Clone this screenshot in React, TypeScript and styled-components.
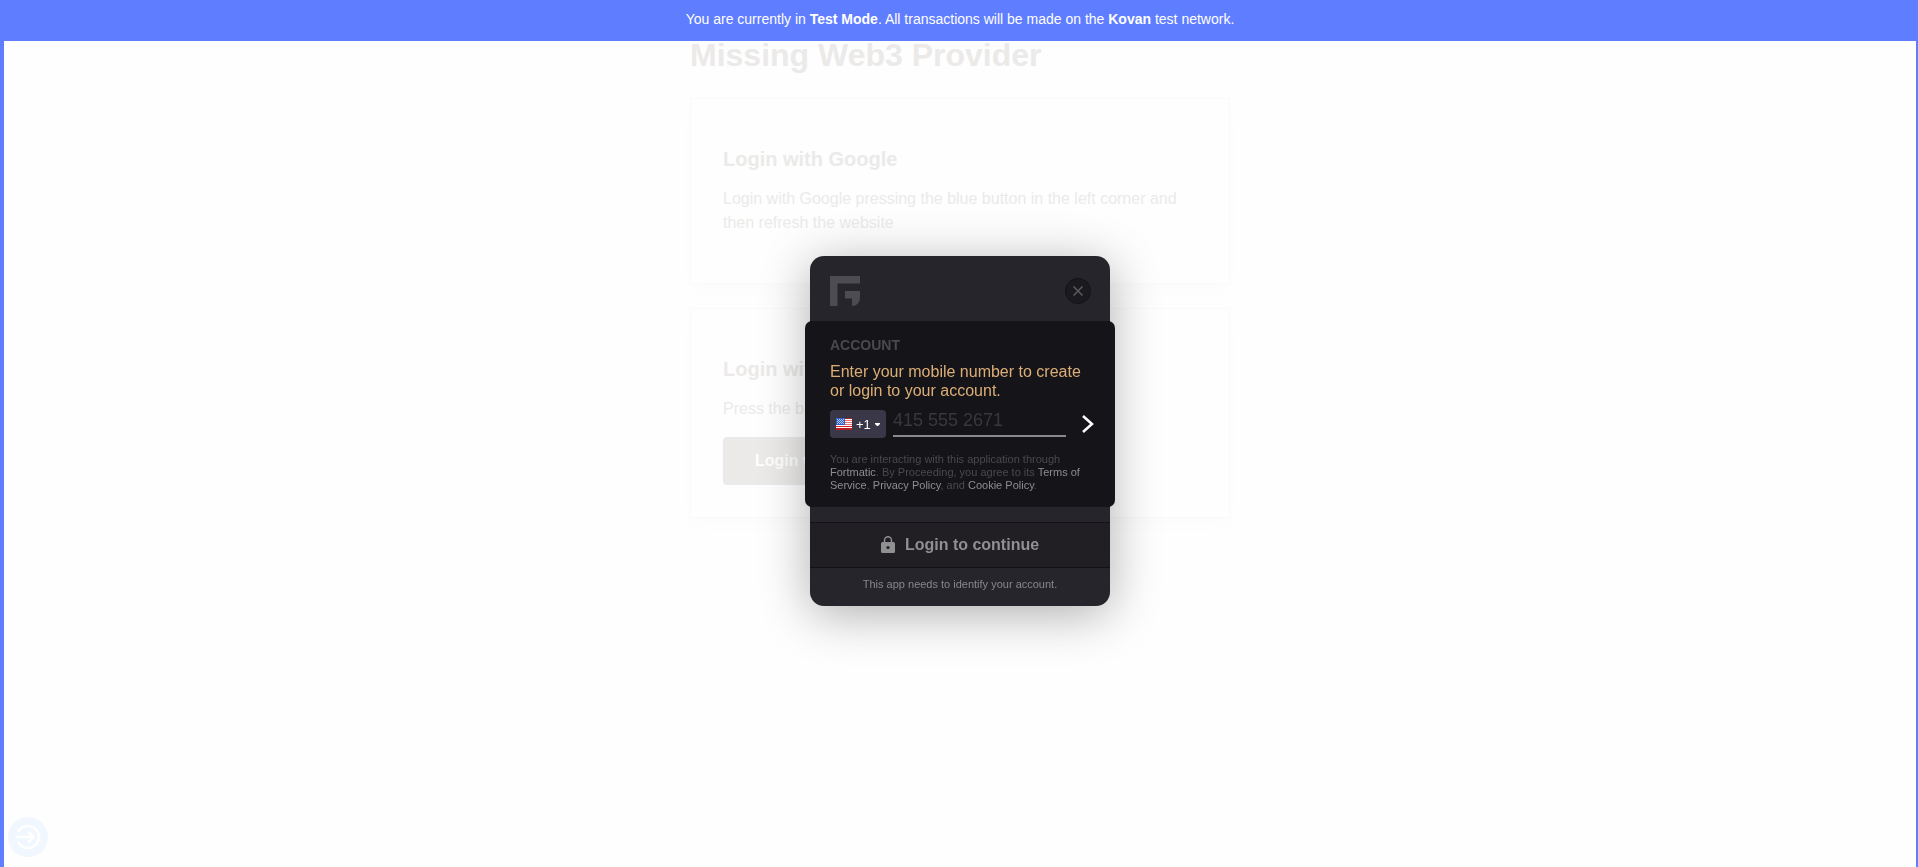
import React from "react";
import styled, { createGlobalStyle } from "styled-components";

const GlobalStyle = createGlobalStyle`
  * { box-sizing: border-box; }
  html, body { margin: 0; }
  body {
    background: #fefefe;
    font-family: "Liberation Sans", Arial, sans-serif;
  }
  h1, h2, p { margin: 0; }
  button { font-family: inherit; cursor: pointer; }
`;

const Page = styled.main`
  min-height: 100vh;
  padding: 36px 16px 24px 18px;
`;

const Content = styled.div`
  max-width: 540px;
  margin: 0 auto;
  display: flex;
  flex-direction: column;
  gap: 24px;
  color: #ebeae9;
`;

const Title = styled.h1`
  font-size: 32px;
  line-height: 38px;
`;

const Card = styled.section`
  display: flex;
  flex-direction: column;
  align-items: flex-start;
  padding: 46px 32px 32px;
  border: 1px solid #fafafa;
  background: #fefefe;
  box-shadow: 0 8px 16px rgba(0, 0, 0, 0.01);
`;

const CardTitle = styled.h2`
  font-size: 20px;
  line-height: 28px;
  margin-bottom: 14px;
`;

const CardText = styled.p`
  font-size: 16px;
  line-height: 24px;
  margin-bottom: 16px;
`;

const LoginButton = styled.button`
  height: 48px;
  padding: 0 31px;
  border: 1px solid #e8e9f1;
  border-radius: 4px;
  background: #ebeae9;
  color: #fefefe;
  font-size: 16px;
  font-weight: 700;
`;

const CornerButton = styled.button`
  position: fixed;
  left: 8px;
  bottom: 10px;
  width: 40px;
  height: 40px;
  padding: 0;
  border: 0;
  border-radius: 50%;
  background: #f0f7ff;
`;

const Overlay = styled.div`
  position: fixed;
  inset: 0;
  display: flex;
  flex-direction: column;
  border: solid #5f7dff;
  border-width: 0 2px 0 4px;
`;

const Banner = styled.header`
  height: 41px;
  padding: 11px 0;
  background: #5f7dff;
  color: #fff;
  font-size: 14px;
  line-height: 16px;
  text-align: center;
`;

const Stage = styled.div`
  flex: 1;
  display: flex;
  align-items: center;
  justify-content: center;
  padding-bottom: 46px;
`;

const Modal = styled.div`
  width: 300px;
  border-radius: 14px;
  background: #26252b;
  box-shadow: 0 8px 50px rgba(0, 0, 0, 0.32);
`;

const ModalHeader = styled.div`
  display: flex;
  align-items: center;
  justify-content: space-between;
  height: 65px;
  padding: 5px 19px 0 20px;
`;

const CloseButton = styled.button`
  display: grid;
  place-items: center;
  width: 26px;
  height: 26px;
  padding: 0;
  border: 1px solid #131217;
  border-radius: 50%;
  background: #1b1a1f;
`;

const Account = styled.form`
  height: 186px;
  margin: 0 -5px;
  padding: 16px 20px 0 25px;
  border-radius: 7px;
  background: #151419;
`;

const AccountTitle = styled.h2`
  color: #4a494e;
  font-size: 14px;
  line-height: 16px;
  margin-bottom: 9px;
`;

const Prompt = styled.label`
  display: block;
  color: #dcae76;
  font-size: 16px;
  line-height: 19px;
`;

const PhoneRow = styled.div`
  display: flex;
  align-items: flex-start;
  gap: 7px;
  margin: 10px -8px 0 0;
`;

const CountryButton = styled.button`
  display: flex;
  flex: none;
  align-items: center;
  width: 56px;
  height: 28px;
  padding: 0 6px;
  gap: 4px;
  border: 0;
  border-radius: 4px;
  background: #3a3848;
  color: #fff;
  font-size: 13px;
  white-space: nowrap;
`;

const PhoneInput = styled.input`
  flex: 1;
  min-width: 0;
  height: 27px;
  padding: 0 0 5px;
  border: 0;
  border-bottom: 2px solid #8a898c;
  outline: none;
  background: transparent;
  color: #fff;
  font: 18px "Liberation Sans", Arial, sans-serif;
  &::placeholder { color: #39383d; opacity: 1; }
`;

const NextButton = styled.button`
  display: grid;
  flex: none;
  place-items: center;
  width: 30px;
  height: 28px;
  padding: 0;
  border: 0;
  background: transparent;
`;

const Terms = styled.p`
  margin-top: 15px;
  color: #4a494e;
  font-size: 11px;
  line-height: 13px;
`;

const TermsLink = styled.a`
  color: #8e8d90;
  text-decoration: none;
`;

const Status = styled.div`
  display: flex;
  align-items: center;
  justify-content: center;
  gap: 10px;
  height: 46px;
  margin-top: 15px;
  border: solid #131217;
  border-width: 1px 0;
  background: #211e24;
  color: #908f92;
  font-size: 16px;
  font-weight: 700;
`;

const Note = styled.p`
  height: 38px;
  padding-top: 10px;
  color: #88878b;
  font-size: 11px;
  line-height: 13px;
  text-align: center;
`;

const Logo = () => (
  <svg width="30" height="30" viewBox="0 0 30 30" fill="#4d4c52" role="img" aria-label="Fortmatic">
    <path d="M0 0H30V7.5H7.5V30H0Z" />
    <path d="M15 15H30V22A8 8 0 0 1 22 30V22.5H15Z" />
  </svg>
);

const Flag = () => (
  <svg width="16" height="12" viewBox="0 0 16 12" aria-hidden="true">
    <rect width="16" height="12" fill="#fff" />
    <rect width="16" height="1" fill="#a8201c" />
    {[2, 4, 6, 8].map((y) => (
      <rect key={y} y={y} width="16" height="1" fill="#ee6b6b" />
    ))}
    <rect y="8" width="16" height="1" fill="#d8232a" />
    <rect y="10" width="16" height="2" fill="#b81d20" />
    <rect y="9" width="16" height="1" fill="#fff" />
    <rect width="9" height="7" fill="#2f62c4" />
    {[1, 3, 5].map((y) =>
      [1, 3, 5, 7].map((x) => <rect key={`${x}-${y}`} x={x} y={y} width="1" height="1" fill="#b5c8ee" />)
    )}
    {[2, 4].map((y) =>
      [2, 4, 6].map((x) => <rect key={`${x}-${y}`} x={x} y={y} width="1" height="1" fill="#b5c8ee" />)
    )}
  </svg>
);

export default function App() {
  return (
    <>
      <GlobalStyle />
      <Page>
        <Content>
          <Title>Missing Web3 Provider</Title>
          <Card>
            <CardTitle>Login with Google</CardTitle>
            <CardText>
              Login with Google pressing the blue button in the left corner and then refresh the website
            </CardText>
          </Card>
          <Card>
            <CardTitle>Login with Fortmatic</CardTitle>
            <CardText>Press the button</CardText>
            <LoginButton type="button">Login with Fortmatic</LoginButton>
          </Card>
        </Content>
        <CornerButton type="button" aria-label="Login">
          <svg width="40" height="40" viewBox="0 0 40 40" fill="none" stroke="#fff" strokeWidth="2.5">
            <path d="M9.8 15.5A11 11 0 1 1 9.8 24.500" />
            <path d="M8 20H25M20 14.500L25.500 20L20 25.500" />
          </svg>
        </CornerButton>
      </Page>
      <Overlay>
        <Banner>
          You are currently in <b>Test Mode</b>. All transactions will be made on the <b>Kovan</b> test network.
        </Banner>
        <Stage>
          <Modal role="dialog" aria-label="Login">
            <ModalHeader>
              <Logo />
              <CloseButton type="button" aria-label="Close">
                <svg width="10" height="10" viewBox="0 0 10 10" stroke="#5c5b60" strokeWidth="1.5">
                  <path d="M0.5 0.5L9.5 9.5M9.5 0.5L0.5 9.5" />
                </svg>
              </CloseButton>
            </ModalHeader>
            <Account onSubmit={(e) => e.preventDefault()}>
              <AccountTitle>ACCOUNT</AccountTitle>
              <Prompt htmlFor="phone">Enter your mobile number to create or login to your account.</Prompt>
              <PhoneRow>
                <CountryButton type="button" aria-label="Country code +1">
                  <Flag />
                  <span>+1</span>
                  <svg width="5" height="3" viewBox="0 0 5 3" fill="#fff" aria-hidden="true">
                    <path d="M0 0H5V1L3 3H2L0 1Z" />
                  </svg>
                </CountryButton>
                <PhoneInput id="phone" type="tel" placeholder="415 555 2671" />
                <NextButton type="submit" aria-label="Continue">
                  <svg width="12" height="18" viewBox="0 0 12 18" fill="none" stroke="#fff" strokeWidth="2.5">
                    <path d="M1 1L10 9L1 17" />
                  </svg>
                </NextButton>
              </PhoneRow>
              <Terms>
                You are interacting with this application through <TermsLink href="#">Fortmatic</TermsLink>. By
                Proceeding, you agree to its <TermsLink href="#">Terms of Service</TermsLink>,{" "}
                <TermsLink href="#">Privacy Policy</TermsLink>, and <TermsLink href="#">Cookie Policy</TermsLink>.
              </Terms>
            </Account>
            <Status>
              <svg width="14" height="18" viewBox="0 0 14 18" aria-hidden="true">
                <path d="M3.5 7V4.200a3.500 3.500 0 0 1 7 0V7" fill="none" stroke="#908f92" strokeWidth="1.5" />
                <rect y="6" width="14" height="11" rx="1.5" fill="#908f92" />
                <circle cx="7" cy="11.500" r="1.6" fill="#211e24" />
              </svg>
              Login to continue
            </Status>
            <Note>This app needs to identify your account.</Note>
          </Modal>
        </Stage>
      </Overlay>
    </>
  );
}
